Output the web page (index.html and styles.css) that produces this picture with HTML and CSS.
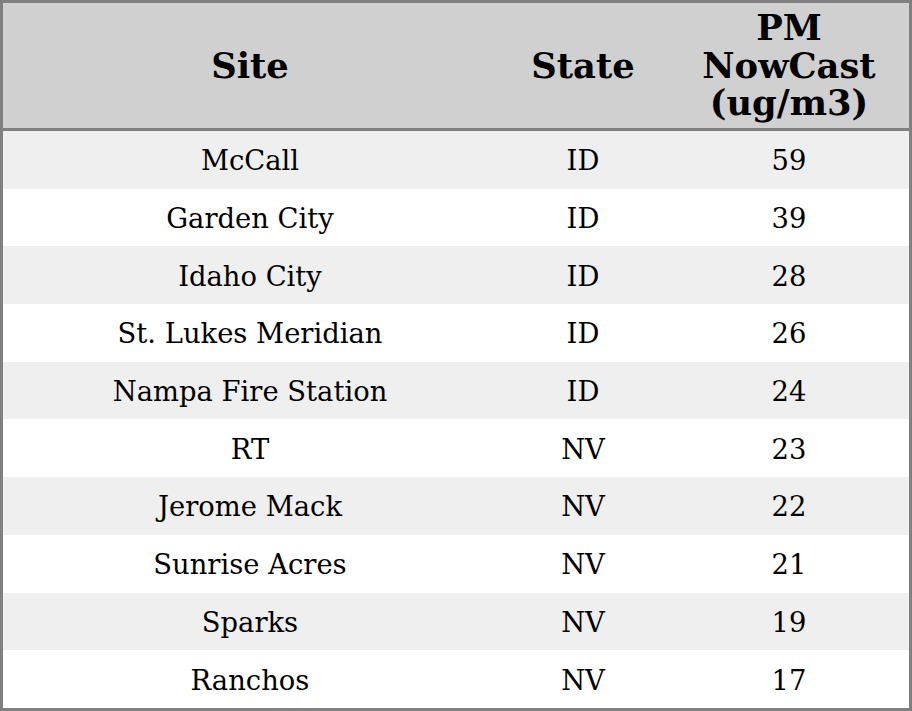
FILE: index.html
```html
<!DOCTYPE html>
<html>
<head>
<meta charset="utf-8">
<link rel="stylesheet" href="styles.css">
</head>
<body>
<table class="aq-table">
  <colgroup>
    <col class="c-site">
    <col class="c-state">
    <col class="c-pm">
  </colgroup>
  <thead>
    <tr><th>Site</th><th>State</th><th>PM<br>NowCast<br>(ug/m3)</th></tr>
  </thead>
  <tbody>
    <tr><td>McCall</td><td>ID</td><td>59</td></tr>
    <tr><td>Garden City</td><td>ID</td><td>39</td></tr>
    <tr><td>Idaho City</td><td>ID</td><td>28</td></tr>
    <tr><td>St. Lukes Meridian</td><td>ID</td><td>26</td></tr>
    <tr><td>Nampa Fire Station</td><td>ID</td><td>24</td></tr>
    <tr><td>RT</td><td>NV</td><td>23</td></tr>
    <tr><td>Jerome Mack</td><td>NV</td><td>22</td></tr>
    <tr><td>Sunrise Acres</td><td>NV</td><td>21</td></tr>
    <tr><td>Sparks</td><td>NV</td><td>19</td></tr>
    <tr><td>Ranchos</td><td>NV</td><td>17</td></tr>
  </tbody>
</table>
</body>
</html>
```

FILE: styles.css
```css
html, body {
  margin: 0;
  padding: 0;
  background: #ffffff;
}
.aq-table {
  width: 912px;
  box-sizing: border-box;
  table-layout: fixed;
  border-collapse: separate;
  border-spacing: 0;
  border: 3px solid #808080;
  font-family: "DejaVu Serif", serif;
  color: #000;
}
.c-site { width: 494px; }
.c-state { width: 172px; }
.c-pm { width: 240px; }
.aq-table th {
  background: #d0d0d0;
  font-size: 35.3px;
  font-weight: bold;
  line-height: 37.5px;
  height: 112.5px;
  padding: 6.25px 0;
  text-align: center;
  border-bottom: 3px solid #808080;
}
.aq-table td {
  font-size: 27.4px;
  line-height: 28px;
  height: 28px;
  padding: 16.35px 0 13.35px;
  text-align: center;
}
.aq-table tbody tr:nth-child(odd) td {
  background: #efefef;
}
.aq-table tbody tr:nth-child(even) td {
  background: #ffffff;
}
```
